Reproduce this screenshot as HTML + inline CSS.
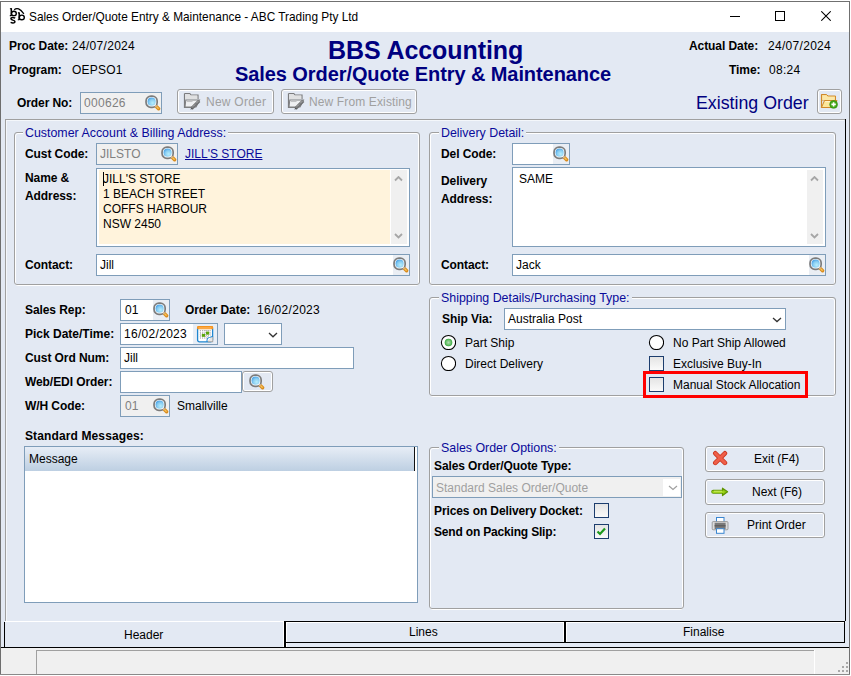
<!DOCTYPE html><html><head><meta charset="utf-8"><style>
html,body{margin:0;padding:0;width:851px;height:676px;overflow:hidden;background:#fff}
.a{position:absolute}
.t{position:absolute;font-family:"Liberation Sans",sans-serif;font-size:12px;line-height:14px;white-space:nowrap;color:#000}
.b{font-weight:bold;letter-spacing:-0.08px}
.g{color:#808080}

</style></head><body>
<svg width="0" height="0" style="position:absolute"><defs>
<radialGradient id="lens" cx="0.62" cy="0.66" r="0.75"><stop offset="0" stop-color="#b8eefc"/><stop offset="0.55" stop-color="#88cdf2"/><stop offset="1" stop-color="#3f9be4"/></radialGradient>
<radialGradient id="rg" cx="0.5" cy="0.5" r="0.55"><stop offset="0" stop-color="#b0dcb0"/><stop offset="0.6" stop-color="#6cc06c"/><stop offset="1" stop-color="#22a02e"/></radialGradient>

</defs></svg>
<div class="a" style="left:0px;top:0px;width:851px;height:676px;background:#fff"></div>
<div class="a" style="left:1px;top:32px;width:848px;height:616px;background:#e3e9f3"></div>
<div class="a" style="left:1px;top:648px;width:848px;height:26px;background:#f0f0f0"></div>
<div class="a" style="left:0px;top:1px;width:1px;height:674px;background:#6e6e6e"></div>
<div class="a" style="left:0px;top:1px;width:850px;height:1px;background:#707070"></div>
<div class="a" style="left:849px;top:1px;width:1px;height:674px;background:#707070"></div>
<div class="a" style="left:0px;top:674px;width:850px;height:1px;background:#8a8a8a"></div>
<svg class="a" style="left:6px;top:4px" width="24" height="22" viewBox="0 0 24 22"><g fill="none" stroke="#000"><path d="M5.3 4.2 V11.8" stroke-width="1.5"/><path d="M3.9 4.7 H5.5 M3.8 11.6 H5.5" stroke-width="1.1"/><ellipse cx="7.9" cy="9.4" rx="2.4" ry="2.2" stroke-width="1.4"/><path d="M13.2 8.4 V16" stroke-width="1.5"/><path d="M11.9 8.9 H13.4 M11.8 15.8 H13.4" stroke-width="1.1"/><ellipse cx="15.8" cy="13.4" rx="2.5" ry="2.3" stroke-width="1.4"/><path d="M8.2 5.8 Q12.2 2.0 17.9 9.8" stroke-width="1.2"/><path d="M9.2 14.2 Q7 12.8 5.2 13.9 Q4.2 15.2 6.8 16.1 Q9.4 16.9 8.8 18.2 Q7.4 19.6 4.6 18.4" stroke-width="1.5"/></g></svg>
<div class="t" style="left:29px;top:10px;font-size:11.85px;color:#000">Sales Order/Quote Entry &amp; Maintenance - ABC Trading Pty Ltd</div>
<div class="a" style="left:730px;top:16px;width:10px;height:1px;background:#000"></div>
<div class="a" style="left:775px;top:11px;width:10px;height:10px;box-sizing:border-box;border:1px solid #000"></div>
<svg class="a" style="left:821px;top:11px" width="10" height="10" viewBox="0 0 10 10"><path d="M0.3 0.3 L9.7 9.7 M9.7 0.3 L0.3 9.7" stroke="#000" stroke-width="1.05"/></svg>
<div class="t b" style="left:9px;top:39px;">Proc Date:</div>
<div class="t " style="left:72px;top:39px;letter-spacing:0.3px">24/07/2024</div>
<div class="t b" style="left:9px;top:63px;">Program:</div>
<div class="t " style="left:72px;top:63px;letter-spacing:0.2px">OEPSO1</div>
<div class="t b" style="left:328px;top:36px;font-size:25px;letter-spacing:-0.08px;line-height:28px;color:#000080">BBS Accounting</div>
<div class="t b" style="left:235px;top:62px;font-size:20px;line-height:24px;color:#000080">Sales Order/Quote Entry &amp; Maintenance</div>
<div class="t b" style="left:689px;top:39px;">Actual Date:</div>
<div class="t " style="left:768px;top:39px;letter-spacing:0.3px">24/07/2024</div>
<div class="t b" style="left:729px;top:63px;">Time:</div>
<div class="t " style="left:769px;top:63px;letter-spacing:0.3px">08:24</div>
<div class="t b" style="left:17px;top:96px;">Order No:</div>
<div class="a" style="left:80px;top:92px;width:82px;height:22px;box-sizing:border-box;border:1px solid #7f9db9;background:#f0f0f0"></div>
<div class="t g" style="left:84px;top:96px;letter-spacing:0.3px">000626</div>
<svg class="a" style="left:145px;top:95px" width="16" height="16" viewBox="0 0 16 16"><rect x="1.05" y="1.05" width="11.1" height="11.3" rx="4.9" fill="#fff" stroke="#7c7c7c" stroke-width="1.7"/><circle cx="6.6" cy="6.7" r="4.1" fill="url(#lens)"/><path d="M11.6 11.7 L13.6 13.7" stroke="#d98c1e" stroke-width="3.4" stroke-linecap="round"/><path d="M11.9 12 L13.2 13.3" stroke="#f9c45a" stroke-width="1.3" stroke-linecap="round"/><path d="M10.3 10.4 L11.4 11.5" stroke="#c8c8c8" stroke-width="1.6"/></svg>
<div class="a" style="left:177px;top:89px;width:97px;height:25px;box-sizing:border-box;border:1px solid #a0a0a0;border-radius:3px;box-shadow:inset 0 0 0 1px #fff"></div>
<div class="a" style="left:281px;top:89px;width:136px;height:25px;box-sizing:border-box;border:1px solid #a0a0a0;border-radius:3px;box-shadow:inset 0 0 0 1px #fff"></div>
<svg class="a" style="left:183px;top:92px" width="18" height="18" viewBox="0 0 18 18" opacity="0.85"><path d="M1.5 1.5 H6.8 L8 3 H15 V7" fill="#d6d6d6" stroke="#6a6a6a" stroke-width="1.2"/><path d="M1.5 1.5 V15.5 H11" fill="none" stroke="#6a6a6a" stroke-width="1.2"/><path d="M2.2 2.2 H6.5 L7.6 3.6 H14.3 V7.5 H2.2 Z" fill="#e0e0e0"/><path d="M2.8 8 H16.5 L13 15 H2 Z" fill="#f2f2f2" stroke="#707070" stroke-width="1.1"/><path d="M4 9.3 H9.5" stroke="#bdbdbd" stroke-width="1.5"/><path d="M8.5 16.6 L16.2 8.9" stroke="#5e5e5e" stroke-width="3.2"/><path d="M9.2 15.3 L15.6 8.9" stroke="#cfcfcf" stroke-width="1" stroke-dasharray="1 1"/><path d="M7.2 17.6 L8.6 15.4 L10 17 Z" fill="#3a3a3a"/></svg>
<svg class="a" style="left:287px;top:92px" width="18" height="18" viewBox="0 0 18 18" opacity="0.85"><path d="M1.5 1.5 H6.8 L8 3 H15 V7" fill="#d6d6d6" stroke="#6a6a6a" stroke-width="1.2"/><path d="M1.5 1.5 V15.5 H11" fill="none" stroke="#6a6a6a" stroke-width="1.2"/><path d="M2.2 2.2 H6.5 L7.6 3.6 H14.3 V7.5 H2.2 Z" fill="#e0e0e0"/><path d="M2.8 8 H16.5 L13 15 H2 Z" fill="#f2f2f2" stroke="#707070" stroke-width="1.1"/><path d="M4 9.3 H9.5" stroke="#bdbdbd" stroke-width="1.5"/><path d="M8.5 16.6 L16.2 8.9" stroke="#5e5e5e" stroke-width="3.2"/><path d="M9.2 15.3 L15.6 8.9" stroke="#cfcfcf" stroke-width="1" stroke-dasharray="1 1"/><path d="M7.2 17.6 L8.6 15.4 L10 17 Z" fill="#3a3a3a"/></svg>
<div class="t " style="left:206px;top:95px;color:#a0a0a0;letter-spacing:0.25px">New Order</div>
<div class="t " style="left:309px;top:95px;color:#a0a0a0;letter-spacing:0.13px">New From Existing</div>
<div class="t" style="left:696px;top:93px;font-size:17.8px;line-height:20px;color:#000080">Existing Order</div>
<div class="a" style="left:817px;top:89px;width:25px;height:25px;box-sizing:border-box;border:1px solid #a0a0a0;border-radius:3px;box-shadow:inset 0 0 0 1px #fff"></div>
<svg class="a" style="left:820px;top:92px" width="18" height="18" viewBox="0 0 18 18"><path d="M1.5 2.5 H6.5 L8 4 H15.5 V8 H1.5 Z" fill="#f6cf78" stroke="#d0892a" stroke-width="1"/><path d="M1.5 2.5 V15.5 H13" fill="none" stroke="#d0892a" stroke-width="1.2"/><path d="M2.2 3.3 H6.2 L7.6 4.8 H14.8 V8 H2.2 Z" fill="#fbe7a8"/><path d="M4.5 8.5 H17 L14 15.5 H1.5 Z" fill="#fde69a" stroke="#d0892a" stroke-width="1"/><path d="M5.2 9.6 H15.4" stroke="#fff6d0" stroke-width="1"/><circle cx="13.6" cy="12.4" r="3.9" fill="#44a818" stroke="#2e8a10" stroke-width="0.6"/><path d="M13.6 10.2 V14.6 M11.4 12.4 H15.8" stroke="#fff" stroke-width="1.6"/></svg>
<div class="a" style="left:5px;top:119px;width:840px;height:1px;background:#a0a0a0"></div>
<div class="a" style="left:5px;top:119px;width:1px;height:502px;background:#a0a0a0"></div>
<div class="a" style="left:6px;top:120px;width:838px;height:1px;background:#f4f7fb"></div>
<div class="a" style="left:6px;top:120px;width:1px;height:501px;background:#f4f7fb"></div>
<div class="a" style="left:845px;top:119px;width:1px;height:502px;background:#000"></div>
<div class="a" style="left:15px;top:133px;width:404px;height:153px;box-sizing:border-box;border:1px solid #fff;border-radius:3px"></div>
<div class="a" style="left:14px;top:132px;width:406px;height:153px;box-sizing:border-box;border:1px solid #a0a0a0;border-radius:3px"></div>
<div class="t" style="left:23px;top:126px;font-size:12.4px;color:#0a0a9a;background:#e3e9f3;padding:0 2px">Customer Account &amp; Billing Address:</div>
<div class="t b" style="left:25px;top:147px;">Cust Code:</div>
<div class="a" style="left:96px;top:143px;width:82px;height:22px;box-sizing:border-box;border:1px solid #7f9db9;background:#f0f0f0"></div>
<div class="t g" style="left:100px;top:147px;">JILSTO</div>
<svg class="a" style="left:161px;top:146px" width="16" height="16" viewBox="0 0 16 16"><rect x="1.05" y="1.05" width="11.1" height="11.3" rx="4.9" fill="#fff" stroke="#7c7c7c" stroke-width="1.7"/><circle cx="6.6" cy="6.7" r="4.1" fill="url(#lens)"/><path d="M11.6 11.7 L13.6 13.7" stroke="#d98c1e" stroke-width="3.4" stroke-linecap="round"/><path d="M11.9 12 L13.2 13.3" stroke="#f9c45a" stroke-width="1.3" stroke-linecap="round"/><path d="M10.3 10.4 L11.4 11.5" stroke="#c8c8c8" stroke-width="1.6"/></svg>
<div class="t " style="left:185px;top:147px;color:#0a0a9a;text-decoration:underline">JILL'S STORE</div>
<div class="t b" style="left:25px;top:171px;">Name &amp;</div>
<div class="t b" style="left:25px;top:189px;">Address:</div>
<div class="a" style="left:96px;top:168px;width:314px;height:79px;box-sizing:border-box;border:1px solid #7f9db9;background:#fff"></div>
<div class="a" style="left:99px;top:170px;width:291px;height:74px;background:#fff3dc"></div>
<div class="a" style="left:391px;top:170px;width:16px;height:74px;background:#f0f0f0"></div>
<svg class="a" style="left:394px;top:176px" width="9" height="5.5" viewBox="0 0 9 5.5"><path d="M1 4.5 L4.5 1 L8 4.5" stroke="#a6a6a6" stroke-width="1.8" fill="none"/></svg>
<svg class="a" style="left:394px;top:233px" width="9" height="5.5" viewBox="0 0 9 5.5"><path d="M1 1 L4.5 4.5 L8 1" stroke="#a6a6a6" stroke-width="1.8" fill="none"/></svg>
<div class="t " style="left:103px;top:172px;">JILL'S STORE</div>
<div class="t " style="left:103px;top:187px;">1 BEACH STREET</div>
<div class="t " style="left:103px;top:202px;">COFFS HARBOUR</div>
<div class="t " style="left:103px;top:217px;">NSW 2450</div>
<div class="a" style="left:103px;top:172px;width:1px;height:14px;background:#000"></div>
<div class="t b" style="left:25px;top:258px;">Contact:</div>
<div class="a" style="left:96px;top:254px;width:314px;height:22px;box-sizing:border-box;border:1px solid #7f9db9;background:#fff"></div>
<div class="a" style="left:393px;top:255px;width:16px;height:20px;background:#eaeef4"></div>
<svg class="a" style="left:393px;top:257px" width="16" height="16" viewBox="0 0 16 16"><rect x="1.05" y="1.05" width="11.1" height="11.3" rx="4.9" fill="#fff" stroke="#7c7c7c" stroke-width="1.7"/><circle cx="6.6" cy="6.7" r="4.1" fill="url(#lens)"/><path d="M11.6 11.7 L13.6 13.7" stroke="#d98c1e" stroke-width="3.4" stroke-linecap="round"/><path d="M11.9 12 L13.2 13.3" stroke="#f9c45a" stroke-width="1.3" stroke-linecap="round"/><path d="M10.3 10.4 L11.4 11.5" stroke="#c8c8c8" stroke-width="1.6"/></svg>
<div class="t " style="left:100px;top:258px;">Jill</div>
<div class="a" style="left:430px;top:133px;width:405px;height:153px;box-sizing:border-box;border:1px solid #fff;border-radius:3px"></div>
<div class="a" style="left:429px;top:132px;width:407px;height:153px;box-sizing:border-box;border:1px solid #a0a0a0;border-radius:3px"></div>
<div class="t" style="left:439px;top:126px;font-size:12.4px;color:#0a0a9a;background:#e3e9f3;padding:0 2px">Delivery Detail:</div>
<div class="t b" style="left:441px;top:147px;">Del Code:</div>
<div class="a" style="left:512px;top:143px;width:58px;height:22px;box-sizing:border-box;border:1px solid #7f9db9;background:#fff"></div>
<div class="a" style="left:553px;top:144px;width:16px;height:20px;background:#eaeef4"></div>
<svg class="a" style="left:553px;top:146px" width="16" height="16" viewBox="0 0 16 16"><rect x="1.05" y="1.05" width="11.1" height="11.3" rx="4.9" fill="#fff" stroke="#7c7c7c" stroke-width="1.7"/><circle cx="6.6" cy="6.7" r="4.1" fill="url(#lens)"/><path d="M11.6 11.7 L13.6 13.7" stroke="#d98c1e" stroke-width="3.4" stroke-linecap="round"/><path d="M11.9 12 L13.2 13.3" stroke="#f9c45a" stroke-width="1.3" stroke-linecap="round"/><path d="M10.3 10.4 L11.4 11.5" stroke="#c8c8c8" stroke-width="1.6"/></svg>
<div class="t b" style="left:441px;top:174px;">Delivery</div>
<div class="t b" style="left:441px;top:192px;">Address:</div>
<div class="a" style="left:512px;top:167px;width:314px;height:80px;box-sizing:border-box;border:1px solid #7f9db9;background:#fff"></div>
<div class="a" style="left:807px;top:170px;width:16px;height:74px;background:#f0f0f0"></div>
<svg class="a" style="left:810px;top:176px" width="9" height="5.5" viewBox="0 0 9 5.5"><path d="M1 4.5 L4.5 1 L8 4.5" stroke="#a6a6a6" stroke-width="1.8" fill="none"/></svg>
<svg class="a" style="left:810px;top:233px" width="9" height="5.5" viewBox="0 0 9 5.5"><path d="M1 1 L4.5 4.5 L8 1" stroke="#a6a6a6" stroke-width="1.8" fill="none"/></svg>
<div class="t " style="left:519px;top:172px;">SAME</div>
<div class="t b" style="left:441px;top:258px;">Contact:</div>
<div class="a" style="left:512px;top:254px;width:314px;height:22px;box-sizing:border-box;border:1px solid #7f9db9;background:#fff"></div>
<div class="a" style="left:809px;top:255px;width:16px;height:20px;background:#eaeef4"></div>
<svg class="a" style="left:809px;top:257px" width="16" height="16" viewBox="0 0 16 16"><rect x="1.05" y="1.05" width="11.1" height="11.3" rx="4.9" fill="#fff" stroke="#7c7c7c" stroke-width="1.7"/><circle cx="6.6" cy="6.7" r="4.1" fill="url(#lens)"/><path d="M11.6 11.7 L13.6 13.7" stroke="#d98c1e" stroke-width="3.4" stroke-linecap="round"/><path d="M11.9 12 L13.2 13.3" stroke="#f9c45a" stroke-width="1.3" stroke-linecap="round"/><path d="M10.3 10.4 L11.4 11.5" stroke="#c8c8c8" stroke-width="1.6"/></svg>
<div class="t " style="left:516px;top:258px;">Jack</div>
<div class="a" style="left:430px;top:298px;width:405px;height:99px;box-sizing:border-box;border:1px solid #fff;border-radius:3px"></div>
<div class="a" style="left:429px;top:297px;width:407px;height:99px;box-sizing:border-box;border:1px solid #a0a0a0;border-radius:3px"></div>
<div class="t" style="left:439px;top:291px;font-size:12.4px;color:#0a0a9a;background:#e3e9f3;padding:0 2px">Shipping Details/Purchasing Type:</div>
<div class="t b" style="left:442px;top:312px;">Ship Via:</div>
<div class="a" style="left:504px;top:308px;width:282px;height:22px;box-sizing:border-box;border:1px solid #7f9db9;background:#fff"></div>
<div class="t " style="left:508px;top:312px;">Australia Post</div>
<svg class="a" style="left:772px;top:317px" width="10" height="5.6" viewBox="0 0 10 5.6"><path d="M1 1 L5.0 4.6 L9 1" stroke="#333" stroke-width="1.3" fill="none"/></svg>
<svg class="a" style="left:440px;top:334px" width="16" height="16" viewBox="0 0 16 16"><circle cx="8.5" cy="8.5" r="7.1" fill="#fff" stroke="#000" stroke-width="1.05"/><circle cx="8.5" cy="8.5" r="3.8" fill="url(#rg)"/></svg>
<div class="t " style="left:465px;top:336px;">Part Ship</div>
<svg class="a" style="left:440px;top:355px" width="16" height="16" viewBox="0 0 16 16"><circle cx="8.5" cy="8.5" r="7.1" fill="#fff" stroke="#000" stroke-width="1.05"/></svg>
<div class="t " style="left:465px;top:357px;">Direct Delivery</div>
<svg class="a" style="left:648px;top:334px" width="16" height="16" viewBox="0 0 16 16"><circle cx="8.5" cy="8.5" r="7.1" fill="#fff" stroke="#000" stroke-width="1.05"/></svg>
<div class="t " style="left:673px;top:336px;">No Part Ship Allowed</div>
<div class="a" style="left:649px;top:356px;width:15px;height:15px;box-sizing:border-box;border:1px solid #1c3d6e;background:linear-gradient(#e4e4e4,#fafafa)"></div>
<div class="t " style="left:673px;top:357px;">Exclusive Buy-In</div>
<div class="a" style="left:649px;top:377px;width:15px;height:15px;box-sizing:border-box;border:1px solid #1c3d6e;background:linear-gradient(#e4e4e4,#fafafa)"></div>
<div class="t " style="left:673px;top:378px;">Manual Stock Allocation</div>
<div class="a" style="left:643px;top:371px;width:165px;height:27px;box-sizing:border-box;border:3px solid #f00"></div>
<div class="t b" style="left:25px;top:303px;">Sales Rep:</div>
<div class="a" style="left:120px;top:299px;width:50px;height:22px;box-sizing:border-box;border:1px solid #7f9db9;background:#fff"></div>
<div class="a" style="left:153px;top:300px;width:16px;height:20px;background:#eaeef4"></div>
<svg class="a" style="left:153px;top:302px" width="16" height="16" viewBox="0 0 16 16"><rect x="1.05" y="1.05" width="11.1" height="11.3" rx="4.9" fill="#fff" stroke="#7c7c7c" stroke-width="1.7"/><circle cx="6.6" cy="6.7" r="4.1" fill="url(#lens)"/><path d="M11.6 11.7 L13.6 13.7" stroke="#d98c1e" stroke-width="3.4" stroke-linecap="round"/><path d="M11.9 12 L13.2 13.3" stroke="#f9c45a" stroke-width="1.3" stroke-linecap="round"/><path d="M10.3 10.4 L11.4 11.5" stroke="#c8c8c8" stroke-width="1.6"/></svg>
<div class="t " style="left:125px;top:303px;">01</div>
<div class="t b" style="left:185px;top:303px;">Order Date:</div>
<div class="t " style="left:257px;top:303px;letter-spacing:0.3px">16/02/2023</div>
<div class="t b" style="left:25px;top:327px;letter-spacing:0px">Pick Date/Time:</div>
<div class="a" style="left:120px;top:323px;width:98px;height:22px;box-sizing:border-box;border:1px solid #7f9db9;background:#fff"></div>
<div class="a" style="left:193px;top:324px;width:24px;height:20px;background:#e8eef6"></div>
<svg class="a" style="left:196px;top:325px" width="18" height="18" viewBox="0 0 18 18"><rect x="1.6" y="1.6" width="15" height="15.2" rx="1.8" fill="#fff" stroke="#1f86d0" stroke-width="1.3"/><rect x="1" y="1" width="16.2" height="3.2" rx="1.2" fill="#f7941d"/><rect x="2.5" y="2.6" width="13" height="0.8" fill="#ffc98a"/><g stroke="#a9a9a9" stroke-width="1" stroke-dasharray="1 1"><path d="M4.3 5.2 V13.5 M6.8 5.2 V13.5 M9.3 5.2 V13.5 M11.8 5.2 V13.5 M14 5.2 V10"/><path d="M4 5.7 H14.5 M4 8.2 H14.5 M4 10.7 H14.5 M4 13 H12"/></g><rect x="5.8" y="8.9" width="3.3" height="2.9" fill="#5aa50a"/><rect x="10" y="6.6" width="3.2" height="3" fill="#5aa50a"/><path d="M11 17.2 L17.2 11 V17.2 Z" fill="#a0a0a0"/><path d="M12 16.3 L16.3 12 V16.3 Z" fill="#e8e8e8"/><path d="M11 17 L11 15 Q11 12.5 13.5 12.5 L17 11.2" fill="none" stroke="#1f86d0" stroke-width="1"/></svg>
<div class="t " style="left:124px;top:327px;letter-spacing:0.3px">16/02/2023</div>
<div class="a" style="left:224px;top:323px;width:58px;height:22px;box-sizing:border-box;border:1px solid #7f9db9;background:#fff"></div>
<svg class="a" style="left:268px;top:332px" width="10" height="5.8" viewBox="0 0 10 5.8"><path d="M1 1 L5.0 4.8 L9 1" stroke="#333" stroke-width="1.3" fill="none"/></svg>
<div class="t b" style="left:25px;top:351px;">Cust Ord Num:</div>
<div class="a" style="left:120px;top:347px;width:234px;height:22px;box-sizing:border-box;border:1px solid #7f9db9;background:#fff"></div>
<div class="t " style="left:124px;top:351px;">Jill</div>
<div class="t b" style="left:25px;top:375px;">Web/EDI Order:</div>
<div class="a" style="left:120px;top:371px;width:122px;height:22px;box-sizing:border-box;border:1px solid #7f9db9;background:#fff"></div>
<div class="a" style="left:242px;top:371px;width:31px;height:21px;box-sizing:border-box;border:1px solid #a0a0a0;border-radius:3px;box-shadow:inset 0 0 0 1px #fff"></div>
<svg class="a" style="left:249px;top:374px" width="16" height="16" viewBox="0 0 16 16"><rect x="1.05" y="1.05" width="11.1" height="11.3" rx="4.9" fill="#fff" stroke="#7c7c7c" stroke-width="1.7"/><circle cx="6.6" cy="6.7" r="4.1" fill="url(#lens)"/><path d="M11.6 11.7 L13.6 13.7" stroke="#d98c1e" stroke-width="3.4" stroke-linecap="round"/><path d="M11.9 12 L13.2 13.3" stroke="#f9c45a" stroke-width="1.3" stroke-linecap="round"/><path d="M10.3 10.4 L11.4 11.5" stroke="#c8c8c8" stroke-width="1.6"/></svg>
<div class="t b" style="left:25px;top:399px;">W/H Code:</div>
<div class="a" style="left:120px;top:395px;width:50px;height:22px;box-sizing:border-box;border:1px solid #7f9db9;background:#f0f0f0"></div>
<div class="t g" style="left:125px;top:399px;">01</div>
<svg class="a" style="left:153px;top:398px" width="16" height="16" viewBox="0 0 16 16"><rect x="1.05" y="1.05" width="11.1" height="11.3" rx="4.9" fill="#fff" stroke="#7c7c7c" stroke-width="1.7"/><circle cx="6.6" cy="6.7" r="4.1" fill="url(#lens)"/><path d="M11.6 11.7 L13.6 13.7" stroke="#d98c1e" stroke-width="3.4" stroke-linecap="round"/><path d="M11.9 12 L13.2 13.3" stroke="#f9c45a" stroke-width="1.3" stroke-linecap="round"/><path d="M10.3 10.4 L11.4 11.5" stroke="#c8c8c8" stroke-width="1.6"/></svg>
<div class="t " style="left:177px;top:399px;">Smallville</div>
<div class="t b" style="left:25px;top:429px;letter-spacing:0.12px">Standard Messages:</div>
<div class="a" style="left:24px;top:446px;width:394px;height:157px;box-sizing:border-box;border:1px solid #7f9db9;background:#fff"></div>
<div class="a" style="left:25px;top:447px;width:389px;height:24px;background:linear-gradient(#e7edf6,#bdcfe2)"></div>
<div class="a" style="left:414px;top:447px;width:1px;height:24px;background:#111"></div>
<div class="t " style="left:29px;top:452px;">Message</div>
<div class="a" style="left:430px;top:448px;width:253px;height:162px;box-sizing:border-box;border:1px solid #fff;border-radius:3px"></div>
<div class="a" style="left:429px;top:447px;width:255px;height:162px;box-sizing:border-box;border:1px solid #a0a0a0;border-radius:3px"></div>
<div class="t" style="left:439px;top:441px;font-size:12.4px;color:#0a0a9a;background:#e3e9f3;padding:0 2px">Sales Order Options:</div>
<div class="t b" style="left:434px;top:459px;letter-spacing:-0.1px">Sales Order/Quote Type:</div>
<div class="a" style="left:432px;top:476px;width:250px;height:22px;box-sizing:border-box;border:1px solid #7f9db9;background:#f0f0f0"></div>
<div class="a" style="left:663px;top:479px;width:17px;height:17px;background:#fff"></div>
<svg class="a" style="left:668px;top:485px" width="10" height="5.5" viewBox="0 0 10 5.5"><path d="M1 1 L5.0 4.5 L9 1" stroke="#a0a0a0" stroke-width="1.2" fill="none"/></svg>
<div class="t " style="left:436px;top:481px;color:#a0a0a0">Standard Sales Order/Quote</div>
<div class="t b" style="left:434px;top:504px;letter-spacing:-0.1px">Prices on Delivery Docket:</div>
<div class="a" style="left:594px;top:503px;width:15px;height:15px;box-sizing:border-box;border:1px solid #1c3d6e;background:linear-gradient(#e4e4e4,#fafafa)"></div>
<div class="t b" style="left:434px;top:525px;letter-spacing:-0.18px">Send on Packing Slip:</div>
<div class="a" style="left:594px;top:524px;width:15px;height:15px;box-sizing:border-box;border:1px solid #1c3d6e;background:linear-gradient(#e4e4e4,#fafafa)"></div>
<svg class="a" style="left:594px;top:524px" width="15" height="15" viewBox="0 0 15 15"><path d="M3.5 7.5 L6 10 L11 4.5" stroke="#1d9a1d" stroke-width="2.2" fill="none"/></svg>
<div class="a" style="left:705px;top:446px;width:120px;height:26px;box-sizing:border-box;border:1px solid #a0a0a0;border-radius:3px;box-shadow:inset 0 0 0 1px #fff"></div>
<svg class="a" style="left:712px;top:450px" width="16" height="16" viewBox="0 0 16 16"><path d="M3.3 3.3 L12.9 12.9 M12.9 3.3 L3.3 12.9" stroke="#c9361f" stroke-width="4.6" stroke-linecap="round"/><path d="M3.3 3.3 L12.9 12.9 M12.9 3.3 L3.3 12.9" stroke="#ef5f49" stroke-width="3" stroke-linecap="round"/></svg>
<div class="t " style="left:754px;top:452px;">Exit (F4)</div>
<div class="a" style="left:705px;top:479px;width:120px;height:26px;box-sizing:border-box;border:1px solid #a0a0a0;border-radius:3px;box-shadow:inset 0 0 0 1px #fff"></div>
<svg class="a" style="left:711px;top:487px" width="18" height="10" viewBox="0 0 18 10"><path d="M2.2 4.8 H12" stroke="#5f9600" stroke-width="4" stroke-linecap="round"/><path d="M11.5 1.2 L16.6 4.8 L11.5 8.6 Z" fill="#8cc414" stroke="#5f9600" stroke-width="1.2" stroke-linejoin="round"/><path d="M2.2 4.8 H12.5" stroke="#9fd41c" stroke-width="2.2" stroke-linecap="round"/><path d="M3 4.2 H11" stroke="#d4f07a" stroke-width="0.8"/></svg>
<div class="t " style="left:752px;top:485px;">Next (F6)</div>
<div class="a" style="left:705px;top:512px;width:120px;height:26px;box-sizing:border-box;border:1px solid #a0a0a0;border-radius:3px;box-shadow:inset 0 0 0 1px #fff"></div>
<svg class="a" style="left:711px;top:516px" width="18" height="18" viewBox="0 0 18 18"><rect x="5.5" y="1.5" width="7.5" height="5" fill="#fff" stroke="#3a86d0" stroke-width="1"/><rect x="1.2" y="5.6" width="15.8" height="8.2" rx="1" fill="#dcdcdc" stroke="#8a8a8a" stroke-width="0.8"/><rect x="3.6" y="6.8" width="11" height="6.2" fill="#7a7a7a"/><rect x="3.6" y="9.2" width="11" height="1.2" fill="#5a5a5a"/><rect x="5.5" y="12.7" width="7.5" height="4.6" fill="#fff" stroke="#3a86d0" stroke-width="1"/></svg>
<div class="t " style="left:747px;top:518px;">Print Order</div>
<div class="a" style="left:5px;top:621px;width:279px;height:1px;background:#fff"></div>
<div class="a" style="left:283px;top:621px;width:1px;height:26px;background:#fff"></div>
<div class="a" style="left:4px;top:622px;width:1px;height:26px;background:#000"></div>
<div class="a" style="left:284px;top:621px;width:561px;height:1px;background:#000"></div>
<div class="a" style="left:284px;top:621px;width:2px;height:27px;background:#000"></div>
<div class="a" style="left:564px;top:621px;width:2px;height:22px;background:#000"></div>
<div class="a" style="left:844px;top:621px;width:1px;height:22px;background:#000"></div>
<div class="a" style="left:286px;top:642px;width:559px;height:1px;background:#000"></div>
<div class="a" style="left:286px;top:622px;width:278px;height:1px;background:#fff"></div>
<div class="a" style="left:286px;top:622px;width:1px;height:20px;background:#fff"></div>
<div class="a" style="left:286px;top:643px;width:1px;height:4px;background:#fff"></div>
<div class="a" style="left:563px;top:622px;width:1px;height:20px;background:#fff"></div>
<div class="a" style="left:566px;top:622px;width:278px;height:1px;background:#fff"></div>
<div class="a" style="left:566px;top:622px;width:1px;height:20px;background:#fff"></div>
<div class="a" style="left:1px;top:647px;width:848px;height:1px;background:#000"></div>
<div class="t " style="left:124px;top:628px;">Header</div>
<div class="t " style="left:409px;top:625px;">Lines</div>
<div class="t " style="left:683px;top:625px;">Finalise</div>
<div class="a" style="left:36px;top:650px;width:778px;height:1px;background:#a0a0a0"></div>
<div class="a" style="left:36px;top:650px;width:1px;height:24px;background:#a0a0a0"></div>
<div class="a" style="left:814px;top:650px;width:1px;height:24px;background:#fff"></div>
<div class="a" style="left:846px;top:662px;width:2px;height:2px;background:#a8a8a8"></div>
<div class="a" style="left:842px;top:666px;width:2px;height:2px;background:#a8a8a8"></div>
<div class="a" style="left:846px;top:666px;width:2px;height:2px;background:#a8a8a8"></div>
<div class="a" style="left:838px;top:670px;width:2px;height:2px;background:#a8a8a8"></div>
<div class="a" style="left:842px;top:670px;width:2px;height:2px;background:#a8a8a8"></div>
<div class="a" style="left:846px;top:670px;width:2px;height:2px;background:#a8a8a8"></div>
</body></html>
